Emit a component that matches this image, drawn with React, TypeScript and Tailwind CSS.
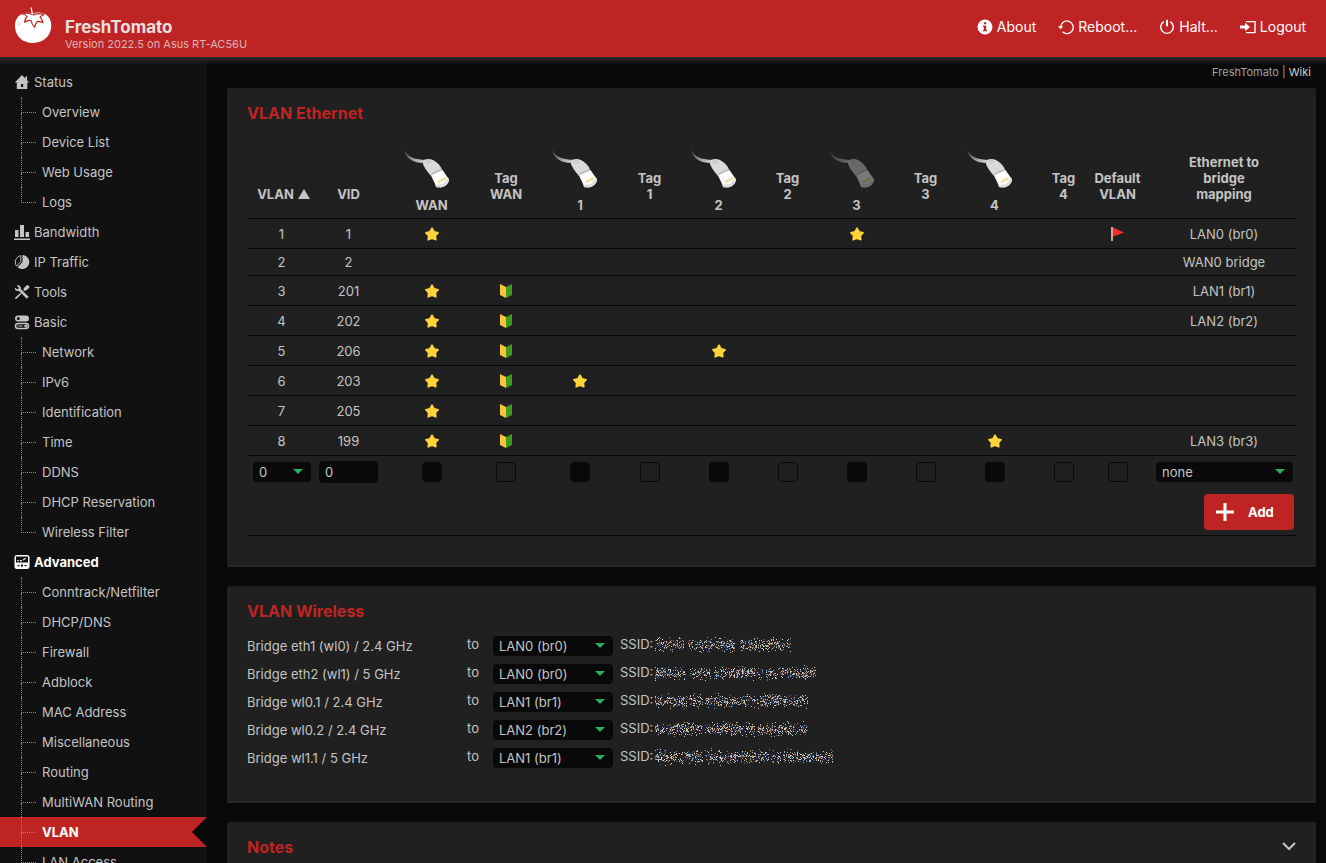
import { ReactNode } from 'react'
import clsx from 'clsx'

type IconProps = { className?: string }

function TomatoLogo() {
  return (
    <svg viewBox="0 0 40 40" className="w-10 h-10 shrink-0" aria-hidden="true">
      <path
        d="M20 8.500c3-1.400 8-1.400 12 .6 4.500 2.600 6.500 7 6.300 12C38 31.500 30 38 20 38S2.200 31.500 2 21.500c-.2-5.500 2-10 6.500-12.300C12 7.500 17 7.300 20 8.500z"
        fill="#fff"
      />
      <path
        d="M20.500 10.500L18 2.500M19 9.500c-3-1.500-6.500-1.500-9.500-.5 2 .3 3.500 1.200 4.500 2.500-1.500 1.500-2.300 3.500-2.300 5.800 2-1.600 4-2.200 6.300-1.800.5 2.500 1.500 4.700 3.600 6.700.6-2.400 1.400-4.300 2.700-5.900 2 0 3.800.3 5.600 1.400-.3-2.500-1.300-4-2.900-5.600 1.300-1.300 2.200-2 4-2.600-3.500-1.300-7-1.300-10.500.5"
        fill="#fff"
        stroke="#bf2424"
        strokeWidth="1.200"
        strokeLinejoin="round"
      />
      <path d="M19.500 9L18 2.500" stroke="#fff" strokeWidth="1.200" />
      <path d="M4 19h4M6 17v4" stroke="#e8e8e8" strokeWidth="1.500" />
    </svg>
  )
}

function Icon({ className, children }: IconProps & { children: ReactNode }) {
  return (
    <svg
      viewBox="0 0 16 16"
      className={clsx('w-4 h-4 shrink-0', className)}
      fill="currentColor"
      aria-hidden="true"
    >
      {children}
    </svg>
  )
}

const icons = {
  status: (
    <Icon>
      <path
        fillRule="evenodd"
        d="M8 1L.8 8.500h2V15h10.500V8.500h2l-2.200-2.300V2.500h-1.800v2zM7 10h2.200v3H7z"
      />
    </Icon>
  ),
  bandwidth: (
    <Icon>
      <path d="M0 14.500h16V16H0zM1 6h3.500v7H1zM6 1h4v12H6zM11.500 8H15v5h-3.500z" />
    </Icon>
  ),
  traffic: (
    <Icon>
      <path d="M8.500 1v7L3.600 13.200A7 7 0 1 0 8.500 1z" />
      <path
        d="M6.800 1.600A6.800 6.800 0 0 0 2.600 12.200l4.200-4.500z"
        fill="none"
        stroke="currentColor"
      />
    </Icon>
  ),
  tools: (
    <Icon>
      <path d="M1 3.500L3.300 5.600 5 4 2.800 1.500C5 .6 7.200 2 6.800 5l7.900 7.800-1.900 2L5 7C2.500 7.500.2 6 1 3.500zM10 4l3-3c1.500.2 2.500 1.200 2.400 2.700L12 6.500l-2 .3-.7-.8zM6.300 9l1 1-4.600 4.800-1.600.2.200-1.500z" />
    </Icon>
  ),
  basic: (
    <Icon>
      <path
        fillRule="evenodd"
        d="M4 1.500h8a3 3 0 0 1 0 6H4a3 3 0 0 1 0-6zm.3 1.500a1.400 1.400 0 1 0 0 3 1.400 1.400 0 0 0 0-3z"
      />
      <rect x="1.500" y="9.500" width="13" height="5" rx="2.500" fill="none" stroke="currentColor" strokeWidth="1.500" />
      <circle cx="11.800" cy="12" r="1.500" />
      <path d="M3.500 11.500h5v1h-5z" />
    </Icon>
  ),
  advanced: (
    <Icon>
      <path
        fillRule="evenodd"
        d="M3 1h10a2.500 2.500 0 0 1 2.500 2.500v9A2.500 2.500 0 0 1 13 15H3a2.500 2.500 0 0 1-2.500-2.500v-9A2.500 2.500 0 0 1 3 1zM2 2.500V8.500h12V2.500zM3.500 11v1.200h2V11zM10.500 11v1.200h2V11zM8 9.800l-1.200 1.800L8 13.400l1.200-1.800z"
      />
      <path d="M3 7.200h2v-1H3zM6 7.200h2V6H6zM9 6.500L11.800 5V3.800L9 5.300z" />
    </Icon>
  ),
  about: (
    <Icon>
      <path
        fillRule="evenodd"
        d="M8 .5a7.500 7.500 0 1 0 0 15 7.500 7.500 0 0 0 0-15zM7 3.200h2.200v2H7zM6 6.500h3.200v4.600H10v1.200H6v-1.200h.9V7.700H6z"
      />
    </Icon>
  ),
  reboot: (
    <Icon>
      <path
        d="M2.600 8.500a6.300 6.300 0 1 1 1.900 4.300"
        fill="none"
        stroke="currentColor"
        strokeWidth="1.300"
      />
      <path d="M0 7.300h5.200L2.600 10.300z" />
    </Icon>
  ),
  halt: (
    <Icon>
      <path
        d="M4.800 2.600a6.300 6.300 0 1 0 6.400 0"
        fill="none"
        stroke="currentColor"
        strokeWidth="1.400"
      />
      <path d="M7 .8h2v6.400H7z" />
    </Icon>
  ),
  logout: (
    <Icon>
      <path
        d="M6 2.600h9v11H6"
        fill="none"
        stroke="currentColor"
        strokeWidth="1.400"
      />
      <path d="M0 6.600h5V3.800L10 8l-5 4.200V9.500H0z" />
    </Icon>
  )
}

function Cable({ dimmed = false }: { dimmed?: boolean }) {
  return (
    <svg
      viewBox="0 0 56 42"
      className={clsx('block mx-auto w-14 h-[42px]', dimmed && 'opacity-40')}
      aria-hidden="true"
    >
      <defs>
        <linearGradient id="cord" x1="0" y1="0" x2="1" y2="1">
          <stop offset="0" stopColor="#888" stopOpacity="0" />
          <stop offset="0.500" stopColor="#888" />
          <stop offset="1" stopColor="#d8d8d8" />
        </linearGradient>
      </defs>
      <path
        d="M0 1c1.500 5 4 8 8 9.500 4 1.500 7 1.800 11 2.200l-1 3.300c-5-.4-8-1.200-11.500-3.400C3 10 .3 7 0 1z"
        fill="url(#cord)"
      />
      <path
        d="M18 14c3-2 7-2.600 11-1 4.500 2.500 7.500 5.500 9.500 10.500L27 29c-4-5-7.500-9-9-15z"
        fill="#dadada"
      />
      <path d="M27 28.500l11.500-5.500 6.500 9.500c-.5 4-3.500 7-8 8l-5-1.500z" fill="#fdfdfd" />
      <path d="M27 28.500l2.500-2.500 8.500-3.500" fill="none" stroke="#a5a5a5" />
      <path d="M21 14.500l5-1M22.500 16.500l5-1.500" stroke="#bdbdbd" strokeWidth=".8" />
      <path d="M31 38l8-1 5.500-6 .5 3c-1.500 3.800-4.500 6-8.500 6.500h-4z" fill="#dedede" />
      <path d="M33.500 34l7.500-4 1.500 2.200-8 4z" fill="#efdf9c" />
    </svg>
  )
}

function Star() {
  return (
    <svg viewBox="0 0 16 16" className="block mx-auto w-4 h-4" role="img" aria-label="yes">
      <path
        d="M8 2.200l2.100 3.600 4 .9-2.700 3 .4 4.100L8 12.200l-3.800 1.600.4-4.100-2.700-3 4-.9z"
        fill="#ffd43b"
        stroke="#ffd43b"
        strokeWidth="1.600"
        strokeLinejoin="round"
      />
    </svg>
  )
}

function TagMark() {
  return (
    <svg viewBox="0 0 12 14" className="block mx-auto w-3 h-3.5" role="img" aria-label="tagged">
      <path d="M0 0l6 3v11l-6-3z" fill="#fcc43a" />
      <path d="M12 0L6 3v11l6-3z" fill="#3f9a1c" />
    </svg>
  )
}

function Flag() {
  return (
    <svg viewBox="0 0 13 14" className="block mx-auto w-[13px] h-3.5" role="img" aria-label="default">
      <path d="M0 0h2v14H0z" fill="#d9a08c" />
      <path d="M2 .5L13 5.500 2 9.500z" fill="#fb2b2b" />
    </svg>
  )
}

type MenuGroup = { name: string; icon: ReactNode; items?: string[] }

const menu: MenuGroup[] = [
  {
    name: 'Status',
    icon: icons.status,
    items: ['Overview', 'Device List', 'Web Usage', 'Logs']
  },
  { name: 'Bandwidth', icon: icons.bandwidth },
  { name: 'IP Traffic', icon: icons.traffic },
  { name: 'Tools', icon: icons.tools },
  {
    name: 'Basic',
    icon: icons.basic,
    items: [
      'Network',
      'IPv6',
      'Identification',
      'Time',
      'DDNS',
      'DHCP Reservation',
      'Wireless Filter'
    ]
  },
  {
    name: 'Advanced',
    icon: icons.advanced,
    items: [
      'Conntrack/Netfilter',
      'DHCP/DNS',
      'Firewall',
      'Adblock',
      'MAC Address',
      'Miscellaneous',
      'Routing',
      'MultiWAN Routing',
      'VLAN',
      'LAN Access'
    ]
  }
]

function MenuItem({ name, last }: { name: string; last: boolean }) {
  const active = name === 'VLAN'
  return (
    <li>
      <a
        href="#"
        className={clsx(
          'flex items-center h-[30px] pl-[21px]',
          active && 'bg-[#bf2424] text-white font-bold'
        )}
      >
        <span className="flex flex-col w-[15px] h-full mr-1.5">
          <span className="h-4 border-l border-b border-dotted border-[#8a8a8a]" />
          {!last && <span className="grow border-l border-dotted border-[#8a8a8a]" />}
        </span>
        {name}
        {active && (
          <svg viewBox="0 0 15 30" className="w-[15px] h-[30px] ml-auto" aria-hidden="true">
            <path d="M15 0L0 15l15 15z" fill="#090909" />
          </svg>
        )}
      </a>
    </li>
  )
}

function Sidebar() {
  return (
    <nav className="w-[207px] shrink-0 pt-2.5 bg-[#111] overflow-hidden">
      {menu.map((group) => (
        <div key={group.name}>
          <a
            href="#"
            className={clsx(
              'flex items-center h-[30px] pl-3.5 gap-1',
              group.name === 'Advanced' && 'text-white font-bold'
            )}
          >
            {group.icon}
            {group.name}
          </a>
          {group.items && (
            <ul>
              {group.items.map((item, i) => (
                <MenuItem
                  key={item}
                  name={item}
                  last={i === group.items!.length - 1 && item !== 'LAN Access'}
                />
              ))}
            </ul>
          )}
        </div>
      ))}
    </nav>
  )
}

function Select(props: {
  id?: string
  label?: string
  value: string
  options: string[]
  className: string
}) {
  return (
    <span className={clsx('relative block', props.className)}>
      <select
        id={props.id}
        aria-label={props.label}
        defaultValue={props.value}
        className="block w-full h-5 pl-1.5 pr-5 rounded bg-[#090909] appearance-none leading-5"
      >
        {props.options.map((option) => (
          <option key={option}>{option}</option>
        ))}
      </select>
      <svg
        viewBox="0 0 10 5"
        className="absolute right-2 top-[7px] w-2.5 h-[5px] pointer-events-none"
        aria-hidden="true"
      >
        <path d="M0 0h10L5 5z" fill="#27ae60" />
      </svg>
    </span>
  )
}

function Panel({ title, children, extra }: { title: string; children?: ReactNode; extra?: ReactNode }) {
  return (
    <section className="px-5 pt-[13px] pb-[29px] bg-[#202020] border-b-2 border-[#282828] rounded-xs">
      <div className="flex items-center justify-between h-6">
        <h2 className="text-base leading-6 font-bold text-[#bf2424]">{title}</h2>
        {extra}
      </div>
      {children}
    </section>
  )
}

const columns = [
  { width: 'w-[69px]' },
  { width: 'w-[65px]' },
  { width: 'w-[101px]' },
  { width: 'w-[48px]' },
  { width: 'w-[100px]' },
  { width: 'w-[39px]' },
  { width: 'w-[99px]' },
  { width: 'w-[39px]' },
  { width: 'w-[99px]' },
  { width: 'w-[39px]' },
  { width: 'w-[99px]' },
  { width: 'w-[39px]' },
  { width: 'w-[69px]' },
  { width: 'w-[144px]' }
]

const ports = ['WAN', '1', '2', '3', '4']

type Vlan = {
  id: number
  vid: number
  ports: string[]
  tags: string[]
  isDefault?: boolean
  bridge: string
}

const vlans: Vlan[] = [
  { id: 1, vid: 1, ports: ['WAN', '3'], tags: [], isDefault: true, bridge: 'LAN0 (br0)' },
  { id: 2, vid: 2, ports: [], tags: [], bridge: 'WAN0 bridge' },
  { id: 3, vid: 201, ports: ['WAN'], tags: ['WAN'], bridge: 'LAN1 (br1)' },
  { id: 4, vid: 202, ports: ['WAN'], tags: ['WAN'], bridge: 'LAN2 (br2)' },
  { id: 5, vid: 206, ports: ['WAN', '2'], tags: ['WAN'], bridge: '' },
  { id: 6, vid: 203, ports: ['WAN', '1'], tags: ['WAN'], bridge: '' },
  { id: 7, vid: 205, ports: ['WAN'], tags: ['WAN'], bridge: '' },
  { id: 8, vid: 199, ports: ['WAN', '4'], tags: ['WAN'], bridge: 'LAN3 (br3)' }
]

const box = 'block mx-auto size-5 rounded appearance-none border border-[#090909]'

function VlanTable() {
  return (
    <table className="w-full mt-[22px] table-fixed border-collapse text-center">
      <colgroup>
        {columns.map((col, i) => (
          <col key={i} className={col.width} />
        ))}
      </colgroup>
      <thead>
        <tr className="h-[71px] align-bottom border-b border-[#090909] leading-4">
          <th className="pl-1 pb-4">
            <span className="inline-flex items-center gap-1">
              VLAN
              <svg viewBox="0 0 12 10" className="w-3 h-2.5" aria-hidden="true">
                <path d="M6 0l6 10H0z" fill="#c4c4c4" />
              </svg>
            </span>
          </th>
          <th className="pb-4">VID</th>
          {ports.map((port) => [
            <th key={port} className="pb-[5px]">
              <Cable dimmed={port === '3'} />
              <span className="block mt-2">{port}</span>
            </th>,
            <th key={'tag' + port} className="pb-4">
              Tag
              <br />
              {port}
            </th>
          ])}
          <th className="pb-4">
            Default
            <br />
            VLAN
          </th>
          <th className="px-6 pb-4">Ethernet to bridge mapping</th>
        </tr>
      </thead>
      <tbody>
        {vlans.map((vlan) => (
          <tr
            key={vlan.id}
            className={clsx(
              'border-b border-[#090909] leading-5',
              vlan.ports.length ? 'h-[30px]' : 'h-[27px]'
            )}
          >
            <td>{vlan.id}</td>
            <td>{vlan.vid}</td>
            {ports.map((port) => [
              <td key={port}>{vlan.ports.includes(port) && <Star />}</td>,
              <td key={'tag' + port}>{vlan.tags.includes(port) && <TagMark />}</td>
            ])}
            <td>{vlan.isDefault && <Flag />}</td>
            <td>{vlan.bridge}</td>
          </tr>
        ))}
        <tr className="h-[33px]">
          <td className="pl-1.5 pr-1">
            <Select
              label="VLAN"
              value="0"
              options={['0', '9', '10', '11', '12', '13', '14', '15']}
              className="w-[58px]"
            />
          </td>
          <td className="px-[3px]">
            <input
              type="text"
              aria-label="VID"
              defaultValue="0"
              className="block w-full h-[22px] px-1.5 rounded bg-[#090909]"
            />
          </td>
          {ports.map((port) => [
            <td key={port}>
              <input
                type="checkbox"
                aria-label={`Port ${port}`}
                className={clsx(box, 'bg-[#090909] checked:bg-[#27ae60]')}
              />
            </td>,
            <td key={'tag' + port}>
              <input
                type="checkbox"
                aria-label={`Tag ${port}`}
                className={clsx(box, 'checked:bg-[#27ae60]')}
              />
            </td>
          ])}
          <td>
            <input
              type="checkbox"
              aria-label="Default VLAN"
              className={clsx(box, 'checked:bg-[#27ae60]')}
            />
          </td>
          <td className="pl-1 pr-[3px]">
            <Select
              label="Ethernet to bridge mapping"
              value="none"
              options={['none', 'LAN0 (br0)', 'LAN1 (br1)', 'LAN2 (br2)', 'LAN3 (br3)']}
              className="w-full text-left"
            />
          </td>
        </tr>
        <tr className="border-b border-[#090909]">
          <td colSpan={14} className="py-[5px] pr-0.5">
            <button
              type="button"
              className="flex items-center w-[90px] h-9 ml-auto pl-3 gap-3.5 rounded bg-[#bf2424] text-white font-bold"
            >
              <svg viewBox="0 0 18 18" className="w-[18px] h-[18px]" aria-hidden="true">
                <path d="M7.500 0h3v7.500H18v3h-7.500V18h-3v-7.500H0v-3h7.500z" fill="currentColor" />
              </svg>
              Add
            </button>
          </td>
        </tr>
      </tbody>
    </table>
  )
}

const speckColors = ['#d8d4c8', '#b9c4cc', '#7fa3bd', '#c9b08a', '#3f6f9c', '#a8793f', '#5c2a2a', '#2a2a66']

// Scatters coloured specks over each word so the network name cannot be read
function HiddenName({ words, seed }: { words: number[][]; seed: number }) {
  let state = seed
  const random = () => {
    state = (state * 1664525 + 1013904223) % 4294967296
    return state / 4294967296
  }
  const paths = speckColors.map(() => '')
  words.forEach(([from, to]) => {
    const count = (to - from) * 6
    for (let i = 0; i < count; i++) {
      const x = Math.floor(from - 1 + random() * (to - from + 3))
      const y = Math.floor((random() + random() + random()) * 6)
      const color = Math.floor(Math.pow(random(), 1.2) * speckColors.length)
      paths[color] += `M${Math.max(x, 0)} ${y}h1v1h-1z`
    }
  })
  return (
    <svg
      viewBox="0 0 180 20"
      className="w-[180px] h-5"
      shapeRendering="crispEdges"
      role="img"
      aria-label="hidden"
    >
      {paths.map((d, i) => (
        <path key={i} d={d} fill={speckColors[i]} />
      ))}
    </svg>
  )
}

const bridges = [
  { id: 'wl0', name: 'Bridge eth1 (wl0) / 2.4 GHz', lan: 'LAN0 (br0)', words: [[0, 27], [34, 78], [86, 134]] },
  { id: 'wl1', name: 'Bridge eth2 (wl1) / 5 GHz', lan: 'LAN0 (br0)', words: [[0, 29], [36, 54], [60, 106], [112, 159]] },
  { id: 'wl01', name: 'Bridge wl0.1 / 2.4 GHz', lan: 'LAN1 (br1)', words: [[0, 46], [51, 99], [103, 151]] },
  { id: 'wl02', name: 'Bridge wl0.2 / 2.4 GHz', lan: 'LAN2 (br2)', words: [[0, 46], [51, 98], [103, 151]] },
  { id: 'wl11', name: 'Bridge wl1.1 / 5 GHz', lan: 'LAN1 (br1)', words: [[0, 46], [51, 72], [76, 124], [129, 176]] }
]

function WirelessBridges() {
  return (
    <div className="flex flex-col mt-[9px]">
      {bridges.map((bridge, i) => (
        <div key={bridge.id} className="flex items-center h-7">
          <label htmlFor={bridge.id} className="w-[220px]">
            {bridge.name}
          </label>
          <span className="w-[26px] pb-1">to</span>
          <Select
            id={bridge.id}
            value={bridge.lan}
            options={['LAN0 (br0)', 'LAN1 (br1)', 'LAN2 (br2)', 'LAN3 (br3)']}
            className="w-[120px]"
          />
          <span className="w-[42px] pl-[7px] pb-1">SSID:</span>
          <HiddenName words={bridge.words} seed={i * 977 + 13} />
        </div>
      ))}
    </div>
  )
}

const actions = [
  { name: 'About', icon: icons.about },
  { name: 'Reboot...', icon: icons.reboot },
  { name: 'Halt...', icon: icons.halt },
  { name: 'Logout', icon: icons.logout }
]

export default function App() {
  return (
    <div className="flex flex-col h-screen overflow-hidden bg-[#090909] font-['Inter',sans-serif] text-[13px] leading-5 text-[#c4c4c4]">
      <header className="flex items-center justify-between h-[57px] shrink-0 pl-[13px] pr-5 bg-[#bf2424]">
        <div className="flex h-full gap-3">
          <div className="pt-[5px]">
            <TomatoLogo />
          </div>
          <div className="pt-[17px]">
            <h1 className="text-[17px] leading-5 font-bold text-[#e8e0e0]">FreshTomato</h1>
            <p className="text-[11px] leading-[14px] text-[#dcb4b4]">Version 2022.5 on Asus RT-AC56U</p>
          </div>
        </div>
        <div className="flex gap-[22px] pb-1 text-sm text-white">
          {actions.map((action) => (
            <a key={action.name} href="#" className="flex items-center gap-1">
              {action.icon}
              {action.name}
            </a>
          ))}
        </div>
      </header>
      <div className="relative flex grow min-h-0">
        <div className="absolute inset-x-0 top-0 h-2 bg-linear-to-b from-[#2c2c2c] to-transparent pointer-events-none" />
        <Sidebar />
        <main className="flex flex-col grow min-w-0 pl-5 pr-2.5 overflow-hidden">
          <div className="h-[31px] shrink-0 pr-[5px] text-right text-[11px] leading-[31px] text-[#a0a0a0]">
            FreshTomato |{' '}
            <a href="#" className="text-[#d0d0d0]">
              Wiki
            </a>
          </div>
          <div className="flex flex-col gap-[19px]">
            <Panel title="VLAN Ethernet">
              <VlanTable />
            </Panel>
            <Panel title="VLAN Wireless">
              <WirelessBridges />
            </Panel>
            <Panel
              title="Notes"
              extra={
                <button type="button" aria-label="Show notes">
                  <svg viewBox="0 0 14 9" className="w-3.5 h-[9px]" aria-hidden="true">
                    <path d="M1 1l6 6 6-6" fill="none" stroke="#c4c4c4" strokeWidth="2" />
                  </svg>
                </button>
              }
            />
          </div>
        </main>
      </div>
    </div>
  )
}
